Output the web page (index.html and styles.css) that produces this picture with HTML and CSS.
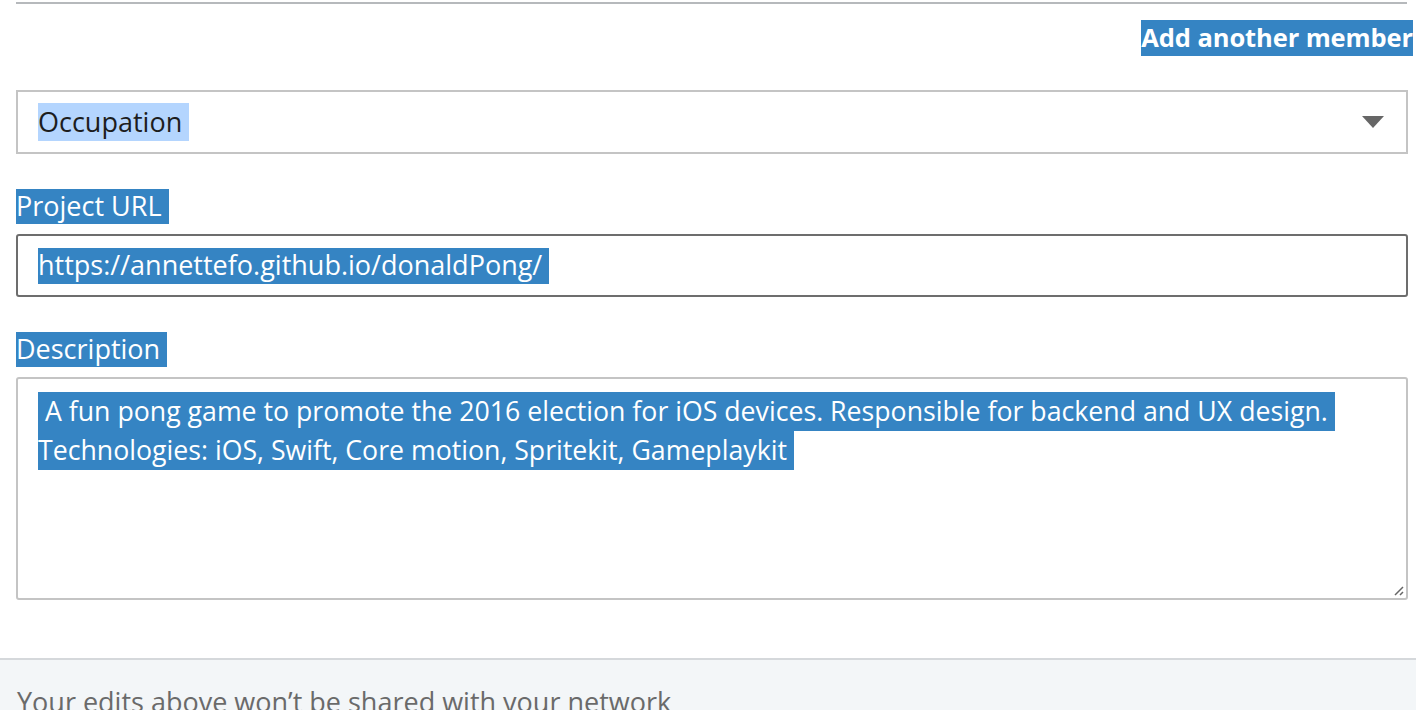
FILE: index.html
```html
<!DOCTYPE html>
<html>
<head>
<meta charset="utf-8">
<link rel="stylesheet" href="styles.css">
</head>
<body>
<div class="form">
  <div class="rule"></div>
  <div class="add-row"><span class="sel bold">Add another member</span></div>
  <div class="select">
    <span class="sel-light">Occupation&nbsp;</span>
    <svg class="caret" width="22" height="12" viewBox="0 0 22 12"><path d="M0 0H22L11 12Z" fill="#666"/></svg>
  </div>
  <div class="label"><span class="sel">Project URL&nbsp;</span></div>
  <div class="input"><span class="sel">https://annettefo.github.io/donaldPong/&nbsp;</span></div>
  <div class="label"><span class="sel">Description&nbsp;</span></div>
  <div class="textarea">
    <div class="ta-text"><span class="sel line">&nbsp;A fun pong game to promote the 2016 election for iOS devices. Responsible for backend and UX design.&nbsp;</span><br><span class="sel line">Technologies: iOS, Swift, Core motion, Spritekit, Gameplaykit&nbsp;</span></div>
    <svg class="grip" width="12" height="12" viewBox="0 0 12 12"><path d="M11 3L3 11M11 8L8 11" stroke="#666" stroke-width="1.5"/></svg>
  </div>
</div>
<div class="footer">Your edits above won’t be shared with your network</div>
</body>
</html>
```
FILE: styles.css
```css
html, body { margin: 0; padding: 0; background: #fff; overflow: hidden; }
body { font-family: "Open Sans", Lato, sans-serif; color: #1d1d1d; height: 710px; }
.form { padding: 2px 8px 0 16px; }
.rule { height: 2px; background: #b6b9bc; margin-right: 1px; }
.add-row { display: flex; justify-content: flex-end; margin-top: 16px; margin-right: -5px; height: 36px; }
.sel { display: inline-block; background: #3584c3; color: #fff; font-size: 27px; height: 36px; line-height: 34px; white-space: pre; }
.bold { font-weight: 700; font-size: 25.5px; letter-spacing: -0.1px; }
.select { margin-top: 34px; height: 60px; border: 2px solid #c4c4c4; display: flex; align-items: center; padding: 0 22px 0 20px; justify-content: space-between; box-sizing: content-box; }
.sel-light { display: inline-block; background: #b4d5fe; color: #1d1d1d; font-size: 27px; height: 38px; line-height: 37px; white-space: pre; }
.label { margin-top: 34px; height: 36px; display: flex; align-items: center; }
.label .sel { height: 35px; line-height: 34px; }
.input { margin-top: 10px; height: 59px; border: 2px solid #6d6d6d; border-radius: 3px; display: flex; align-items: center; padding-left: 20px; }
.textarea { margin-top: 10px; border: 2px solid #c4c4c4; border-radius: 3px; position: relative; padding: 13px 0 0 20px; box-sizing: border-box; height: 223px; }
.ta-text { line-height: 39px; font-size: 0; }
.ta-text .sel { font-size: 26.7px; height: 39px; line-height: 38px; vertical-align: top; }
.grip { position: absolute; right: 2px; bottom: 2px; }
.footer { position: absolute; left: 0; right: 0; top: 658px; height: 60px; border-top: 2px solid #d5d8db; background: #f3f6f8; color: #6a6a6a; font-size: 27px; line-height: 36px; padding: 24px 0 0 17px; box-sizing: border-box; white-space: nowrap; }
```
